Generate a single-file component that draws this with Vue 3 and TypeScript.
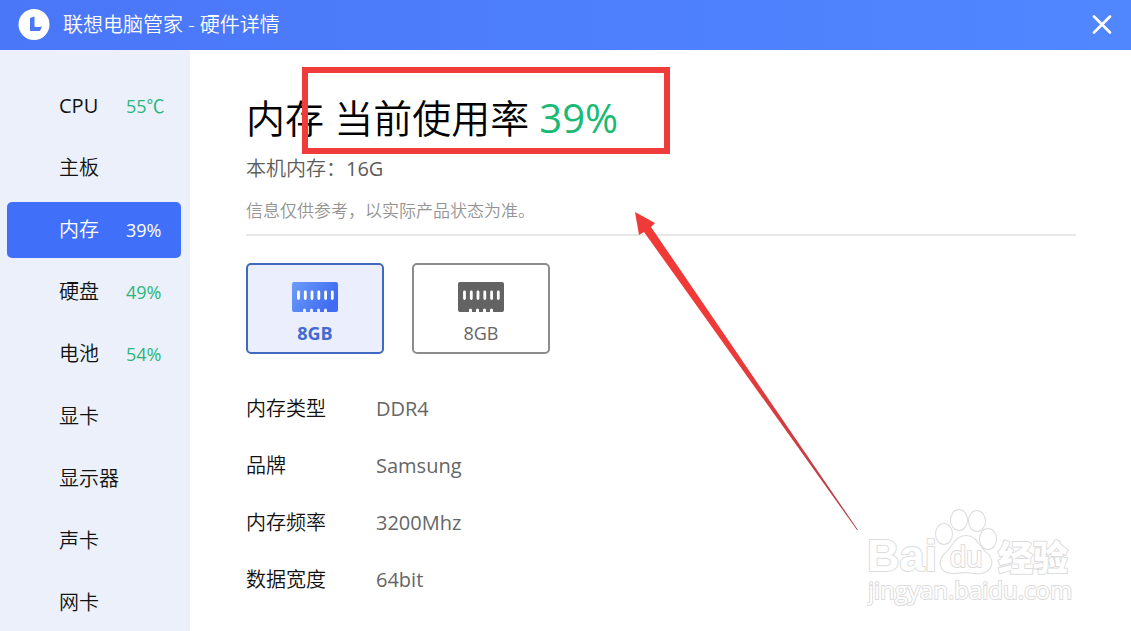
<script setup lang="ts">
import { ref } from 'vue'

interface NavItem {
  name: string
  value?: string
  latin?: boolean
}

interface Spec {
  label: string
  value: string
}

const navItems: NavItem[] = [
  { name: 'CPU', value: '55℃', latin: true },
  { name: '主板' },
  { name: '内存', value: '39%' },
  { name: '硬盘', value: '49%' },
  { name: '电池', value: '54%' },
  { name: '显卡' },
  { name: '显示器' },
  { name: '声卡' },
  { name: '网卡' },
]

const modules: string[] = ['8GB', '8GB']

const specs: Spec[] = [
  { label: '内存类型', value: 'DDR4' },
  { label: '品牌', value: 'Samsung' },
  { label: '内存频率', value: '3200Mhz' },
  { label: '数据宽度', value: '64bit' },
]

const activeNav = ref(2)
const activeModule = ref(0)
</script>

<template>
  <div class="window">
    <header class="titlebar">
      <svg class="logo" viewBox="0 0 32 32" aria-hidden="true">
        <circle cx="16" cy="15.500" r="15.5" fill="#fff" />
        <path d="M12 9L16.500 7.500V17.500Q19 18.500 24 17.500L22 22H12Z" fill="#4a78f8" />
      </svg>
      <h1 class="caption">联想电脑管家 - 硬件详情</h1>
      <button class="close" type="button" aria-label="关闭">
        <svg viewBox="0 0 20 20" aria-hidden="true">
          <path d="M2 1.500l16 16M18 1.500L2 17.500" fill="none" stroke="#fff" stroke-width="2.600" stroke-linecap="round" />
        </svg>
      </button>
    </header>

    <div class="body">
      <nav class="sidebar">
        <button
          v-for="(item, i) in navItems"
          :key="item.name"
          type="button"
          class="nav-item"
          :class="{ active: i === activeNav }"
          @click="activeNav = i"
        >
          <span class="nav-name" :class="{ latin: item.latin }">{{ item.name }}</span>
          <span v-if="item.value" class="nav-value latin">{{ item.value }}</span>
        </button>
      </nav>

      <main class="content">
        <section class="summary">
          <h2 class="usage">内存 当前使用率 <span class="percent latin">39%</span></h2>
          <p class="total">本机内存：<span class="latin">16G</span></p>
          <p class="note">信息仅供参考，以实际产品状态为准。</p>
        </section>

        <div class="modules">
          <button
            v-for="(size, i) in modules"
            :key="i"
            type="button"
            class="module"
            :class="{ selected: i === activeModule }"
            @click="activeModule = i"
          >
            <svg class="chip" viewBox="0 0 46 32" aria-hidden="true">
              <defs>
                <linearGradient id="chip-blue" x1="0" y1="0" x2="1" y2="0.4">
                  <stop offset="0" stop-color="#6c9cf8" />
                  <stop offset="1" stop-color="#3f6cf2" />
                </linearGradient>
              </defs>
              <path
                class="chip-body"
                d="M2 1H44Q46 1 46 3V29Q46 31 44 31H35V29a1.500 1.500 0 0 0-3 0V31H28V29a1.500 1.500 0 0 0-3 0V31H21V29a1.500 1.500 0 0 0-3 0V31H14V29a1.500 1.500 0 0 0-3 0V31H2Q0 31 0 29V3Q0 1 2 1Z"
              />
              <path
                d="M6.500 11v6.500M13.300 11v6.500M20 11v6.500M26.800 11v6.500M33.600 11v6.500M40.300 11v6.500"
                stroke="#fff"
                stroke-width="2.800"
                stroke-linecap="round"
              />
            </svg>
            <span class="module-size">{{ size }}</span>
          </button>
        </div>

        <dl class="specs">
          <div v-for="spec in specs" :key="spec.label" class="spec">
            <dt>{{ spec.label }}</dt>
            <dd class="latin">{{ spec.value }}</dd>
          </div>
        </dl>
      </main>
    </div>

    <div class="highlight" aria-hidden="true"></div>
    <svg class="arrow" viewBox="0 0 224 320" aria-hidden="true">
      <defs>
        <linearGradient id="arrow-red" x1="0" y1="0" x2="0" y2="1">
          <stop offset="0.4" stop-color="#f03a38" />
          <stop offset="1" stop-color="#b04048" />
        </linearGradient>
      </defs>
      <path d="M0 0L20 11L16 15L223 318L222 318L9 20L4 23Z" fill="url(#arrow-red)" />
    </svg>

    <svg class="watermark" viewBox="0 0 210 104" aria-label="Baidu 经验">
      <g class="mark">
        <text x="0" y="66" class="brand">Bai</text>
        <ellipse cx="77" cy="29" rx="8" ry="10" />
        <ellipse cx="92" cy="15" rx="8" ry="10" />
        <ellipse cx="110" cy="16" rx="8" ry="10" />
        <ellipse cx="121" cy="34" rx="8" ry="10" />
        <path d="M99 31C89 31 87 40 80 47C70 55 72 68 86 68C93 68 95 67 99 67C104 67 106 69 114 68C126 66 128 54 118 47C111 40 109 31 99 31Z" />
        <text x="83" y="62" class="du">du</text>
        <text x="131" y="66" class="cn">经验</text>
        <text x="1" y="94" class="site">jingyan.baidu.com</text>
      </g>
    </svg>
  </div>
</template>

<style>
body {
  margin: 0;
}
</style>

<style scoped>
.window {
  position: relative;
  display: flex;
  flex-direction: column;
  min-height: 100vh;
  overflow: hidden;
  background: #fff;
  color: #111;
  font-family: 'Open Sans', 'Noto Sans CJK SC', sans-serif;
  font-size: 20px;
  font-weight: 350;
  line-height: 28px;
}

button {
  margin: 0;
  padding: 0;
  border: 0;
  background: none;
  color: inherit;
  font: inherit;
  cursor: pointer;
}

.latin {
  font-weight: 400;
}

.titlebar {
  display: flex;
  align-items: center;
  height: 50px;
  padding: 0 19px 1px 18px;
  box-sizing: border-box;
  background: linear-gradient(90deg, #4a76f8, #5087ff);
  color: #fff;
}

.logo {
  width: 32px;
  height: 32px;
}

.caption {
  flex: 1;
  margin: 0 0 0 13px;
  font-size: 20px;
  font-weight: 350;
}

.close {
  display: flex;
}

.close svg {
  width: 20px;
  height: 20px;
}

.body {
  display: flex;
  flex: 1;
}

.sidebar {
  display: grid;
  grid-auto-rows: 1fr;
  row-gap: 7px;
  width: 190px;
  padding: 28px 9px 0 7px;
  box-sizing: border-box;
  background: #ebf0fa;
}

.nav-item {
  display: flex;
  align-items: center;
  padding-left: 52px;
  border-radius: 5px;
  text-align: left;
}

.nav-name {
  width: 67px;
}

.nav-value {
  color: #2cb67d;
  font-size: 18px;
}

.nav-item.active {
  background: #4070fa;
  color: #fff;
}

.nav-item.active .nav-value {
  color: #fff;
}

.content {
  flex: 1;
  padding: 40px 55px 0 56px;
}

.summary {
  border-bottom: 2px solid #e8e8e8;
  padding-bottom: 9px;
}

.usage {
  margin: 0;
  font-size: 39px;
  font-weight: 350;
  line-height: 56px;
  color: #000;
}

.percent {
  color: #18ba74;
  font-size: 40px;
}

.total {
  margin: 9px 0 0;
  color: #5c5c5c;
}

.note {
  margin: 14px 0 0;
  color: #949494;
  font-size: 17px;
}

.modules {
  display: flex;
  gap: 28px;
  margin-top: 27px;
}

.module {
  display: flex;
  flex-direction: column;
  align-items: center;
  width: 138px;
  height: 91px;
  padding-top: 16px;
  box-sizing: border-box;
  border: 2px solid #8c8c8c;
  border-radius: 5px;
  color: #666;
  font-size: 18px;
  font-weight: 400;
}

.module.selected {
  border-color: #4169c0;
  background: #eaeefd;
  color: #456bd0;
  font-weight: 700;
}

.chip {
  width: 46px;
  height: 32px;
}

.chip-body {
  fill: #636363;
}

.selected .chip-body {
  fill: url(#chip-blue);
}

.module-size {
  margin-top: 6px;
  line-height: 28px;
}

.specs {
  display: grid;
  row-gap: 29px;
  margin: 41px 0 0;
}

.spec {
  display: flex;
}

.spec dt {
  width: 130px;
}

.spec dd {
  margin: 0;
  color: #666;
}

.highlight {
  position: absolute;
  top: 67px;
  left: 302px;
  width: 368px;
  height: 87px;
  box-sizing: border-box;
  border: 6px solid #ef3b3a;
  pointer-events: none;
}

.arrow {
  position: absolute;
  top: 212px;
  left: 635px;
  width: 224px;
  height: 320px;
  pointer-events: none;
}

.watermark {
  position: absolute;
  right: 54px;
  bottom: 22px;
  width: 210px;
  height: 104px;
  pointer-events: none;
}

.mark {
  fill: #fff;
  stroke: #dcdcdc;
  stroke-width: 2;
  stroke-linejoin: round;
  paint-order: stroke;
}

.brand {
  font: 700 45px 'Liberation Sans', sans-serif;
}

.du {
  font: 400 29px 'Liberation Sans', sans-serif;
}

.cn {
  font: 900 35px 'Noto Sans CJK SC', sans-serif;
}

.site {
  font: 400 24px 'Open Sans', sans-serif;
}
</style>
